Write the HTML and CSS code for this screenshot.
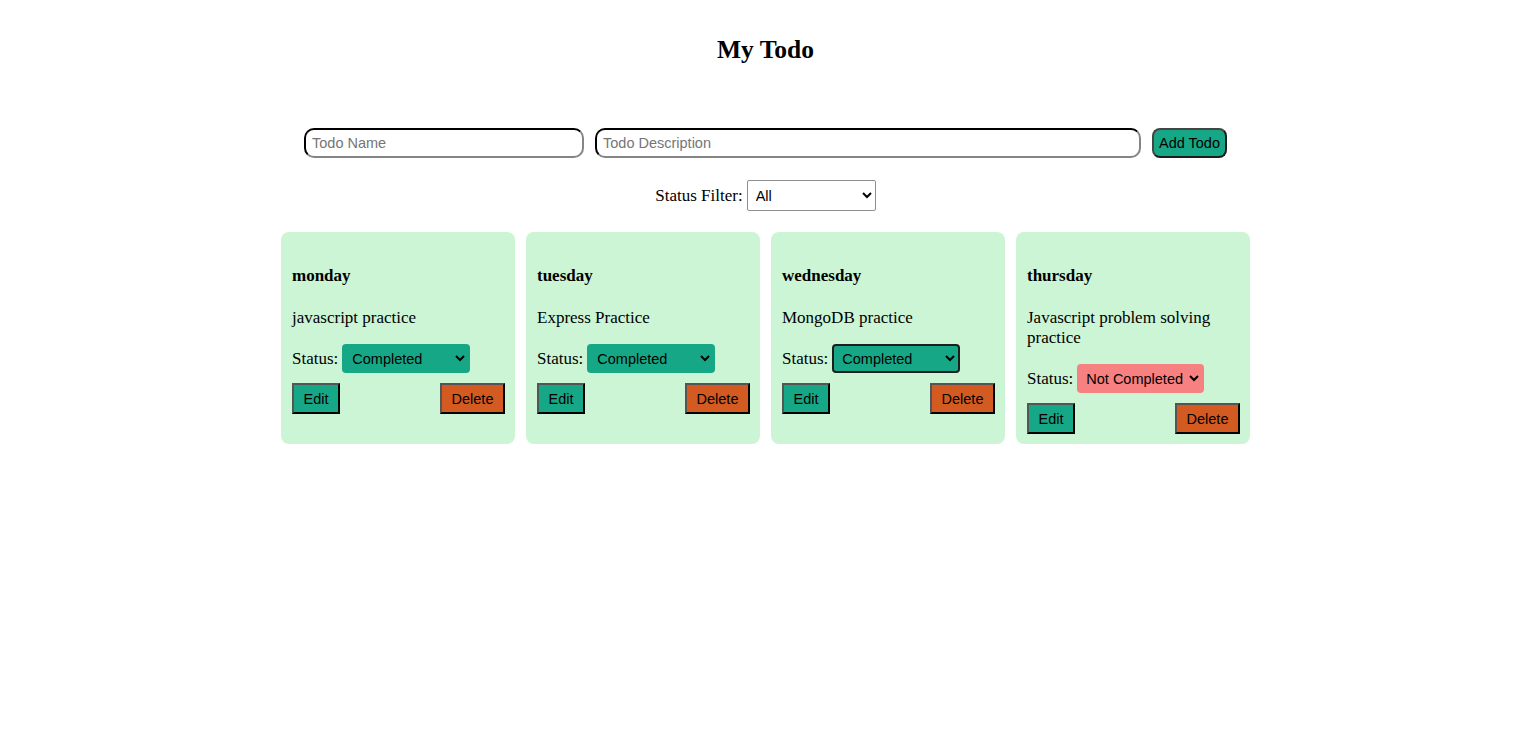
FILE: index.html
```html
<!DOCTYPE html>
<html>
<head>
<meta charset="utf-8">
<title>My Todo</title>
<link rel="stylesheet" href="styles.css">
</head>
<body>
<div class="app">
  <h1 class="title">My Todo</h1>
  <div class="add-row">
    <input class="inp inp-name" type="text" placeholder="Todo Name">
    <input class="inp inp-desc" type="text" placeholder="Todo Description">
    <button class="add-btn">Add Todo</button>
  </div>
  <div class="filter-row">
    <span class="filter-label">Status Filter:</span>
    <select class="filter-select"><option>All</option><option>Completed</option><option>Not Completed</option></select>
  </div>
  <div class="cards">
    <div class="card">
      <h4 class="card-name">monday</h4>
      <p class="card-desc">javascript practice</p>
      <div class="status-row"><span>Status:</span><select class="status done"><option>Completed</option><option>Not Completed</option></select></div>
      <div class="actions"><button class="btn edit">Edit</button><button class="btn del">Delete</button></div>
    </div>
    <div class="card">
      <h4 class="card-name">tuesday</h4>
      <p class="card-desc">Express Practice</p>
      <div class="status-row"><span>Status:</span><select class="status done"><option>Completed</option><option>Not Completed</option></select></div>
      <div class="actions"><button class="btn edit">Edit</button><button class="btn del">Delete</button></div>
    </div>
    <div class="card">
      <h4 class="card-name">wednesday</h4>
      <p class="card-desc">MongoDB practice</p>
      <div class="status-row"><span>Status:</span><select class="status done focused"><option>Completed</option><option>Not Completed</option></select></div>
      <div class="actions"><button class="btn edit">Edit</button><button class="btn del">Delete</button></div>
    </div>
    <div class="card">
      <h4 class="card-name">thursday</h4>
      <p class="card-desc">Javascript problem solving practice</p>
      <div class="status-row"><span>Status:</span><select class="status notdone"><option>Not Completed</option><option>Completed</option></select></div>
      <div class="actions"><button class="btn edit">Edit</button><button class="btn del">Delete</button></div>
    </div>
  </div>
</div>
</body>
</html>
```
FILE: styles.css
```css
html, body {
  margin: 0;
  padding: 0;
  background: #ffffff;
}
body {
  font-family: "Liberation Serif", "Times New Roman", serif;
  font-size: 17px;
  color: #000;
}
.app {
  display: flex;
  flex-direction: column;
  align-items: center;
  padding-left: 10px;
}
.title {
  font-size: 25.5px;
  font-weight: bold;
  margin: 35px 0 0 0;
  line-height: 29px;
}
.add-row {
  display: flex;
  gap: 11px;
  margin-top: 64px;
  height: 30px;
}
.inp {
  box-sizing: border-box;
  height: 30px;
  border: 2px inset #767676;
  border-top-color: #3b3b3b;
  border-left-color: #3b3b3b;
  border-bottom-color: #858585;
  border-right-color: #858585;
  border-radius: 10px;
  padding: 0 6px;
  font-family: "Liberation Sans", Arial, sans-serif;
  font-size: 14.5px;
  background: #fff;
  outline: none;
}
.inp::placeholder { color: #757575; }
.inp-name { width: 280px; }
.inp-desc { width: 546px; }
.add-btn {
  box-sizing: border-box;
  width: 75px;
  height: 30px;
  background: #16a886;
  border: 2px solid #1c1c1c;
  border-top-color: #444;
  border-left-color: #444;
  border-radius: 8px;
  font-family: "Liberation Sans", Arial, sans-serif;
  font-size: 14.5px;
  color: #000;
  padding: 0;
}
.filter-row {
  display: flex;
  align-items: center;
  gap: 4px;
  margin-top: 22px;
  height: 31px;
}
.filter-select {
  box-sizing: border-box;
  width: 129px;
  height: 31px;
  border: 1px solid #8f8f8f;
  border-radius: 2px;
  background: #fff;
  font-family: "Liberation Sans", Arial, sans-serif;
  font-size: 14.5px;
  padding: 0 4px;
  color: #000;
}
.cards {
  display: grid;
  grid-template-columns: repeat(4, 234px);
  gap: 11px;
  margin-top: 21px;
}
.card {
  background: #ccf5d5;
  border-radius: 8px;
  padding: 10px 10px 10px 11px;
  display: flex;
  flex-direction: column;
}
.card-name {
  font-size: 17px;
  font-weight: bold;
  margin: 24px 0 0 0;
  line-height: 20px;
}
.card-desc {
  margin: 22px 0 0 0;
  line-height: 20px;
}
.status-row {
  display: flex;
  align-items: center;
  gap: 4px;
  margin-top: 16px;
}
.status {
  box-sizing: border-box;
  height: 29px;
  border: 2px solid transparent;
  border-radius: 4px;
  font-family: "Liberation Sans", Arial, sans-serif;
  font-size: 14.5px;
  padding: 0 0 0 4px;
  color: #000;
}
.status.done { background: #16a886; width: 128px; }
.status.notdone { background: #f78080; width: 127px; padding-left: 3px; }
.status.focused { border-color: #1e1e1e; }
.actions {
  display: flex;
  justify-content: space-between;
  margin-top: 10px;
}
.btn {
  box-sizing: border-box;
  height: 31px;
  border: 2px outset #767676;
  border-top-color: #555;
  border-left-color: #555;
  border-right-color: #111;
  border-bottom-color: #111;
  font-family: "Liberation Sans", Arial, sans-serif;
  font-size: 14.5px;
  color: #000;
  padding: 0;
  border-radius: 0;
}
.btn.edit { background: #16a886; width: 48px; }
.btn.del { background: #d35a20; width: 65px; }
```
